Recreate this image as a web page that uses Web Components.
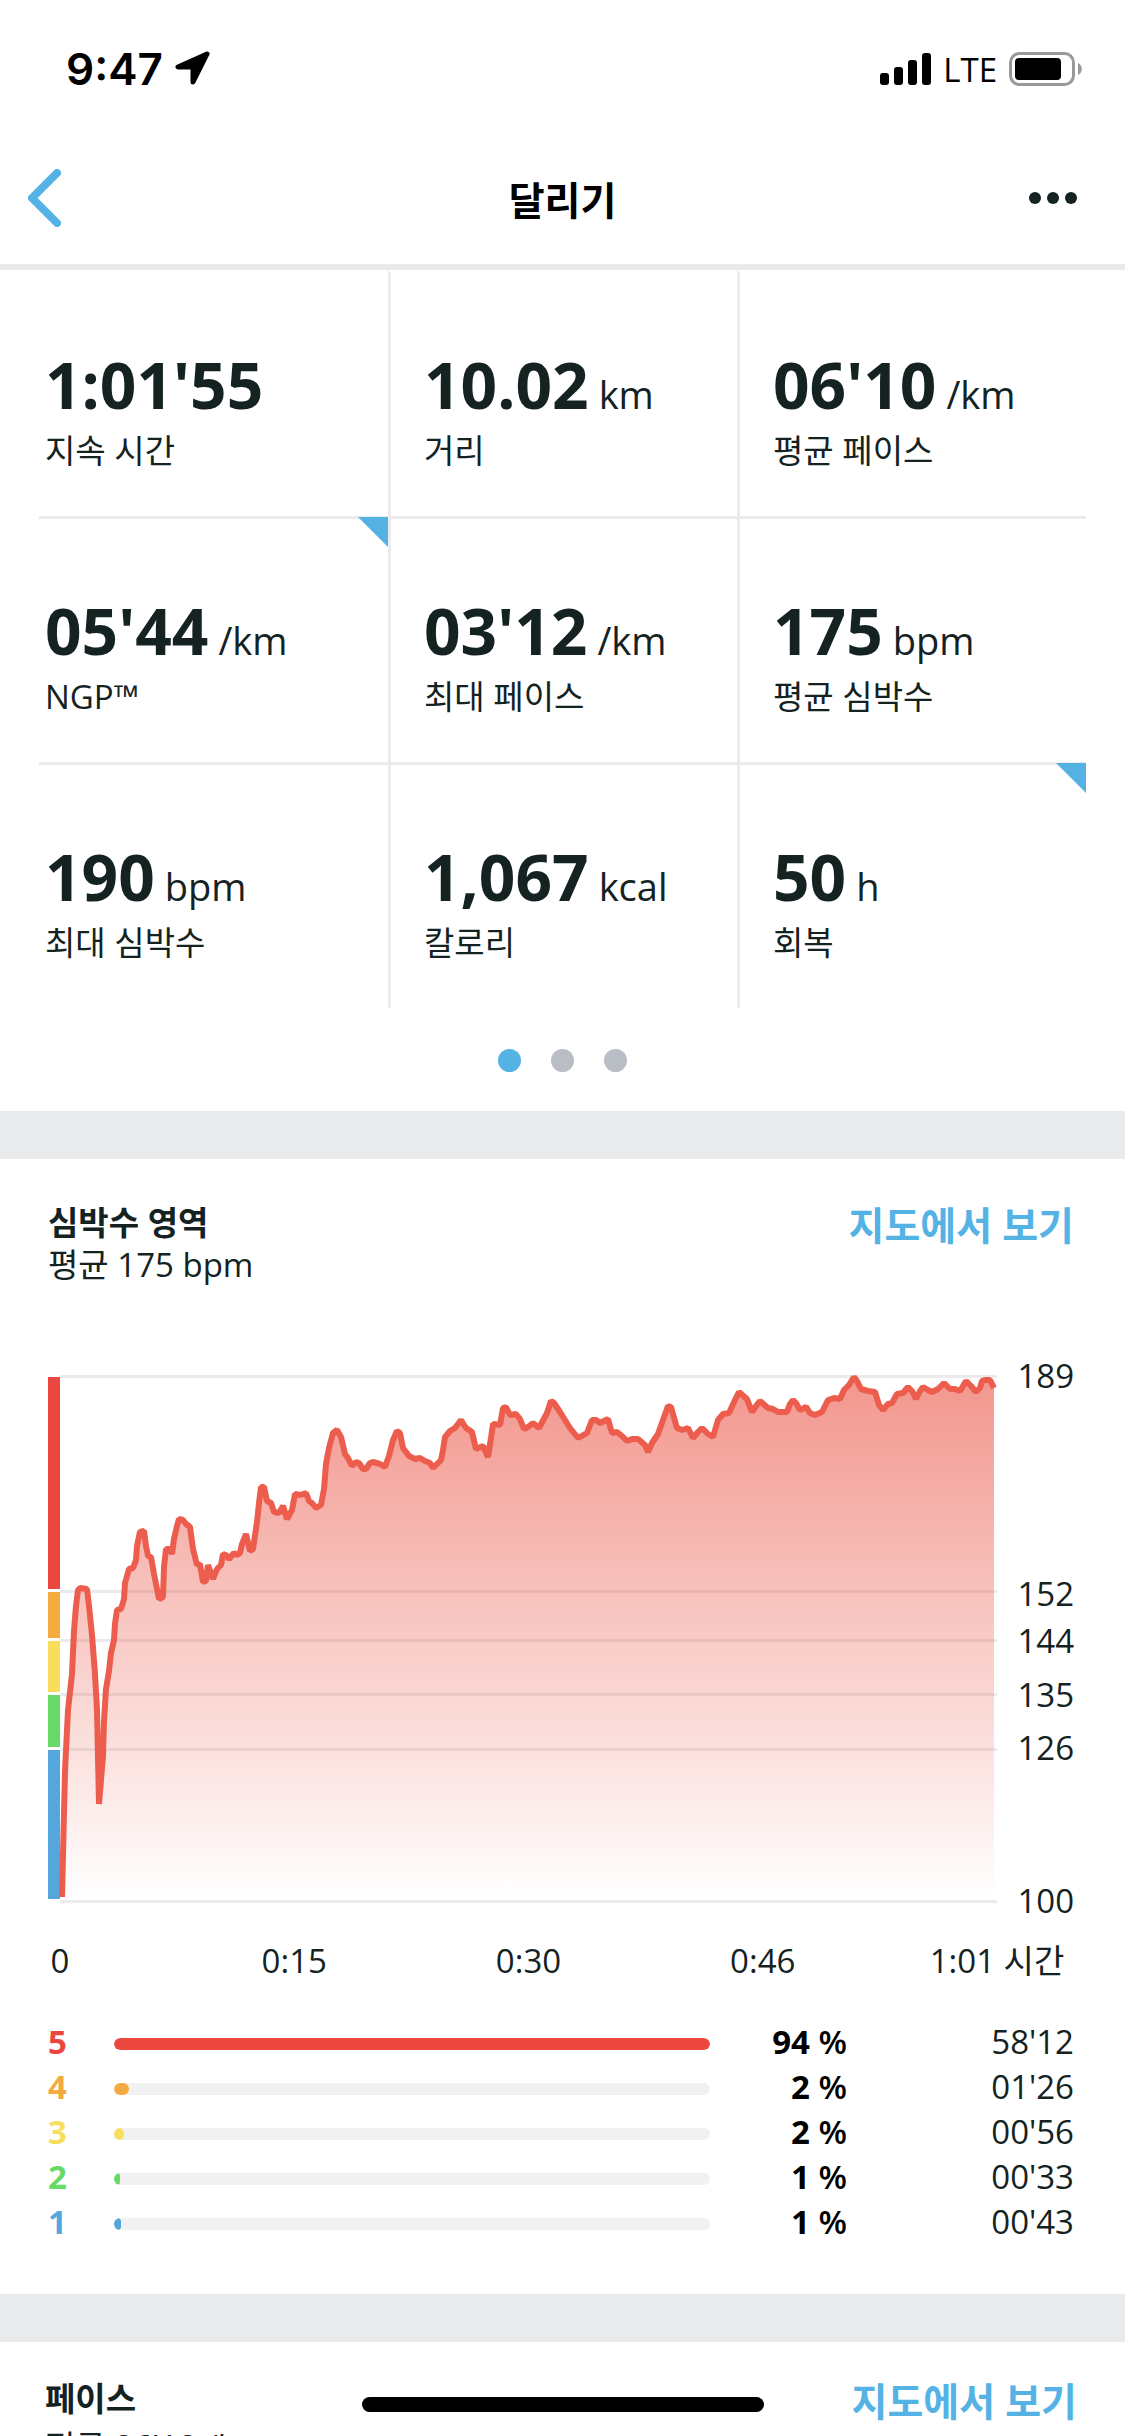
<!DOCTYPE html>
<html lang="ko">
<head>
<meta charset="utf-8">
<meta name="viewport" content="width=device-width, initial-scale=1">
<title>달리기</title>
<style>
  body {
    margin: 0;
    background: #fff;
  }
</style>
</head>
<body>
<workout-app></workout-app>

<script>
const ZONES = [
  { zone: 5, from: 152, percent: 94, time: "58'12", color: "#eb473f" },
  { zone: 4, from: 144, percent: 2, time: "01'26", color: "#f3ab3f" },
  { zone: 3, from: 135, percent: 2, time: "00'56", color: "#f9dd5c" },
  { zone: 2, from: 126, percent: 1, time: "00'33", color: "#67da68" },
  { zone: 1, from: 100, percent: 1, time: "00'43", color: "#55a6dd" }
];

const MAX_BPM = 189;
const TICKS = ["0", "0:15", "0:30", "0:46", "1:01 시간"];

const CURVE = `2,521 5,395 8,334 12,298 14,255 16,230 18,214 20,212 27,213 29,230 32,259 35,298 37,334 39,428
  43,380 44,345 46,313 49,295 51,277 54,264 55,248 57,234 61,233 64,223 65,207 69,193 73,192 76,184 77,170
  80,156 84,155 86,170 88,180 91,181 94,198 99,223 103,221 104,191 106,173 110,173 112,178 114,163 117,150
  119,143 123,144 126,148 130,151 133,173 137,189 140,188 143,206 146,205 148,189 153,203 157,193 161,189
  163,178 166,179 169,183 174,177 177,179 180,177 182,168 186,158 190,175 193,173 197,146 199,127 201,111
  204,111 207,125 211,127 214,136 219,137 223,130 227,143 232,134 235,118 240,119 246,117 249,125 252,127
  256,132 261,129 264,113 266,88 269,72 273,57 277,54 281,61 285,78 288,82 292,90 296,86 299,87 303,93
  306,93 310,87 313,86 320,88 325,91 329,80 333,64 337,55 340,57 343,72 349,80 355,83 360,82 365,85 370,87
  373,92 381,84 383,74 385,61 390,55 395,52 401,44 406,52 412,56 416,73 423,70 428,81 431,62 433,48 440,49
  443,32 446,31 450,39 456,38 460,43 464,53 468,51 473,47 479,52 487,37 491,25 494,27 500,36 510,52 518,62
  527,57 532,44 536,44 540,47 548,43 552,57 557,56 562,60 567,65 572,63 578,63 585,69 588,76 592,67 598,58
  603,44 608,30 611,31 617,52 622,54 628,52 633,62 638,56 642,52 648,58 653,61 658,44 663,38 669,37 675,24
  679,16 687,23 692,36 696,30 700,25 708,32 713,33 718,36 727,36 730,28 733,24 736,27 740,34 746,31 750,37
  755,39 762,36 768,24 774,22 780,23 784,14 789,9 794,1 797,5 801,13 808,15 815,16 819,29 823,34 828,28
  832,27 837,18 843,17 848,11 852,15 856,23 860,15 863,11 868,14 872,16 878,13 884,7 890,13 895,13 900,15
  906,5 911,10 916,16 920,12 922,5 926,4 930,4 934,12`;

class StatusBar extends HTMLElement {
  constructor() {
    super();
    this.attachShadow({ mode: "open" });
  }

  static get styles() {
    return /* css */`
      :host {
        display: flex;
        justify-content: space-between;
        align-items: center;
        box-sizing: border-box;
        height: 132px;
        padding: 6px 43px 0 66px;
        color: #000;
      }

      .side {
        display: flex;
        align-items: center;
        gap: 12px;
      }

      .time {
        font-family: Inter, "Liberation Sans", sans-serif;
        font-size: 44px;
        font-weight: 600;
      }

      .network {
        font-size: 33px;
        font-weight: 500;
      }

      svg {
        display: block;
      }
    `;
  }

  connectedCallback() {
    this.render();
  }

  render() {
    this.shadowRoot.innerHTML = /* html */`
    <style>${StatusBar.styles}</style>
    <div class="side">
      <span class="time">9:47</span>
      <svg width="36" height="36" viewBox="0 0 36 36" aria-hidden="true">
        <path d="M32 3 3 16h15v15z" stroke="#000" stroke-width="5" stroke-linejoin="round"/>
      </svg>
    </div>
    <div class="side">
      <svg width="51" height="32" viewBox="0 0 51 32" aria-hidden="true">
        <rect y="20" width="9" height="12" rx="3"/>
        <rect x="14" y="14" width="9" height="18" rx="3"/>
        <rect x="28" y="7" width="9" height="25" rx="3"/>
        <rect x="42" width="9" height="32" rx="3"/>
      </svg>
      <span class="network">LTE</span>
      <svg width="73" height="34" viewBox="0 0 73 34" aria-hidden="true">
        <rect x="1.5" y="1.5" width="63" height="31" rx="9" fill="none" stroke="#999" stroke-width="3"/>
        <rect x="6" y="6" width="46" height="22" rx="4"/>
        <path d="M69 11c5 2 5 10 0 12z" fill="#999"/>
      </svg>
    </div>`;
  }
}

class NavBar extends HTMLElement {
  constructor() {
    super();
    this.attachShadow({ mode: "open" });
  }

  static get styles() {
    return /* css */`
      :host {
        display: grid;
        grid-template-columns: 1fr auto 1fr;
        align-items: center;
        height: 132px;
        border-bottom: 6px solid var(--color-band);
      }

      h1 {
        margin: 0;
        padding-top: 4px;
        color: #000;
        font-size: 39px;
        line-height: 50px;
        font-weight: 600;
      }

      button {
        padding: 20px 28px;
        border: 0;
        background: none;
      }

      .more {
        justify-self: end;
        padding: 20px 48px;
      }

      svg {
        display: block;
      }
    `;
  }

  connectedCallback() {
    this.render();
  }

  render() {
    this.shadowRoot.innerHTML = /* html */`
    <style>${NavBar.styles}</style>
    <button aria-label="뒤로">
      <svg width="33" height="58" viewBox="0 0 33 58">
        <path d="M29 4 4 29l25 25" fill="none" stroke="#54b2e5" stroke-width="8" stroke-linecap="round" stroke-linejoin="round"/>
      </svg>
    </button>
    <h1><slot></slot></h1>
    <button class="more" aria-label="더 보기">
      <svg width="48" height="12" viewBox="0 0 48 12" fill="#142222">
        <circle cx="6" cy="6" r="6"/>
        <circle cx="24" cy="6" r="6"/>
        <circle cx="42" cy="6" r="6"/>
      </svg>
    </button>`;
  }
}

class MetricCell extends HTMLElement {
  constructor() {
    super();
    this.attachShadow({ mode: "open" });
  }

  static get styles() {
    return /* css */`
      :host {
        display: block;
        position: relative;
        box-sizing: border-box;
        padding: 80px 0 43px 33px;
        border-top: 3px solid var(--color-line);
        border-left: 3px solid var(--color-line);
      }

      :host(:nth-child(3n + 1)) {
        padding-left: 6px;
        border-left: 0;
      }

      :host(:nth-child(-n + 3)) {
        border-top-color: transparent;
      }

      :host([details])::after {
        content: "";
        position: absolute;
        top: -2px;
        right: 0;
        width: 30px;
        height: 30px;
        background: var(--color-accent);
        clip-path: polygon(0 0, 100% 0, 100% 100%);
      }

      .value {
        display: flex;
        align-items: baseline;
        gap: 10px;
        font-size: 38px;
        line-height: 38px;
        white-space: nowrap;
      }

      strong {
        font-size: 64px;
        line-height: 64px;
        font-weight: 700;
      }

      .label {
        margin-top: 12px;
        font-size: 33px;
        line-height: 44px;
      }
    `;
  }

  connectedCallback() {
    this.render();
  }

  render() {
    const unit = this.getAttribute("unit");
    this.shadowRoot.innerHTML = /* html */`
    <style>${MetricCell.styles}</style>
    <div class="value">
      <strong>${this.getAttribute("value")}</strong>
      ${unit ? `<span>${unit}</span>` : ""}
    </div>
    <div class="label"><slot></slot></div>`;
  }
}

class MetricPager extends HTMLElement {
  constructor() {
    super();
    this.attachShadow({ mode: "open" });
  }

  static get styles() {
    return /* css */`
      :host {
        display: block;
        border-bottom: 48px solid var(--color-band);
      }

      .grid {
        display: grid;
        grid-template-columns: repeat(3, 1fr);
        margin: 0 39px;
      }

      .dots {
        display: flex;
        justify-content: center;
        gap: 30px;
        padding: 41px 0 39px;
      }

      button {
        width: 23px;
        height: 23px;
        padding: 0;
        border: 0;
        border-radius: 50%;
        background: #b9bec4;
      }

      .on {
        background: var(--color-accent);
      }
    `;
  }

  connectedCallback() {
    this.render();
  }

  render() {
    this.shadowRoot.innerHTML = /* html */`
    <style>${MetricPager.styles}</style>
    <div class="grid"><slot></slot></div>
    <div class="dots">
      <button class="on" aria-label="1 페이지"></button>
      <button aria-label="2 페이지"></button>
      <button aria-label="3 페이지"></button>
    </div>`;
  }
}

class ChartSection extends HTMLElement {
  constructor() {
    super();
    this.attachShadow({ mode: "open" });
  }

  static get styles() {
    return /* css */`
      :host {
        display: block;
        padding: 43px 51px 50px 48px;
        border-bottom: 48px solid var(--color-band);
      }

      :host([compact]) {
        padding: 36px 48px 50px 45px;
      }

      header {
        display: flex;
        justify-content: space-between;
        align-items: flex-start;
        font-size: 33px;
        line-height: 42px;
      }

      h2 {
        margin: 0;
        font-size: 33px;
        font-weight: 600;
      }

      :host([compact]) h2 {
        margin-bottom: 6px;
      }

      p {
        margin: 0;
      }

      a {
        color: var(--color-accent);
        font-size: 39px;
        line-height: 46px;
        font-weight: 600;
        text-decoration: none;
      }
    `;
  }

  connectedCallback() {
    this.render();
  }

  render() {
    this.shadowRoot.innerHTML = /* html */`
    <style>${ChartSection.styles}</style>
    <header>
      <div>
        <h2>${this.getAttribute("heading")}</h2>
        <p>${this.getAttribute("average")}</p>
      </div>
      <a href="#map">지도에서 보기</a>
    </header>
    <slot></slot>`;
  }
}

class HeartChart extends HTMLElement {
  constructor() {
    super();
    this.attachShadow({ mode: "open" });
  }

  static get styles() {
    return /* css */`
      :host {
        display: block;
        margin-top: 89px;
        font-size: 33px;
        line-height: 44px;
      }

      .chart {
        display: grid;
        grid-template-columns: 12px 1fr 77px;
        height: 528px;
      }

      .zones, .lines, .labels {
        display: flex;
        flex-direction: column;
      }

      .zones {
        padding: 2px 0 4px;
        gap: 3px;
      }

      .plot {
        display: grid;
      }

      .plot > * {
        grid-area: 1 / 1;
      }

      .lines, .labels {
        border-bottom: 3px solid var(--color-line);
      }

      .labels {
        align-items: flex-end;
        border-bottom-color: transparent;
      }

      .lines div {
        border-top: 3px solid var(--color-line);
      }

      .labels span {
        height: 0;
      }

      .labels b {
        display: block;
        margin-top: -21px;
        font-weight: 400;
      }

      svg {
        width: 100%;
        height: 100%;
        overflow: visible;
      }

      .ticks {
        display: flex;
        justify-content: space-between;
        margin: 36px 77px 0 12px;
      }

      .ticks span {
        display: flex;
        justify-content: center;
        width: 0;
        white-space: nowrap;
      }
    `;
  }

  connectedCallback() {
    this.render();
  }

  // every band is as tall as its share of the bpm range
  bands(draw) {
    let top = MAX_BPM;
    return ZONES.map(zone => {
      const html = draw(zone, top - zone.from, top);
      top = zone.from;
      return html;
    }).join("");
  }

  render() {
    this.shadowRoot.innerHTML = /* html */`
    <style>${HeartChart.styles}</style>
    <div class="chart">
      <div class="zones">
        ${this.bands((zone, size) => `<div style="flex: ${size} 0 0; background: ${zone.color}"></div>`)}
      </div>
      <div class="plot">
        <div class="lines">
          ${this.bands((zone, size) => `<div style="flex: ${size} 0 0; box-sizing: border-box"></div>`)}
        </div>
        <svg viewBox="0 -1 937 528" preserveAspectRatio="none" aria-hidden="true">
          <defs>
            <linearGradient id="fade" x1="0" y1="0" x2="0" y2="1">
              <stop offset="0" stop-color="#e94b3c" stop-opacity=".58"/>
              <stop offset="1" stop-color="#e94b3c" stop-opacity="0"/>
            </linearGradient>
          </defs>
          <polygon points="${CURVE} 934,524 2,524" fill="url(#fade)"/>
          <polyline points="${CURVE}" fill="none" stroke="#ec5d4d" stroke-width="6" stroke-linejoin="bevel"/>
        </svg>
      </div>
      <div class="labels">
        ${this.bands((zone, size, top) => `<span style="flex: ${size} 0 0"><b>${top}</b></span>`)}
        <span><b>100</b></span>
      </div>
    </div>
    <div class="ticks">
      ${TICKS.map(tick => `<span>${tick}</span>`).join("")}
    </div>`;
  }
}

class ZoneTable extends HTMLElement {
  constructor() {
    super();
    this.attachShadow({ mode: "open" });
  }

  static get styles() {
    return /* css */`
      :host {
        display: block;
        margin-top: 36px;
      }

      table {
        width: 100%;
        border-collapse: collapse;
        table-layout: fixed;
        font-size: 33px;
        line-height: 45px;
      }

      th, td {
        padding: 0;
        text-align: right;
        font-weight: 400;
      }

      .zone {
        width: 66px;
        text-align: left;
        font-weight: 700;
      }

      .percent {
        width: 137px;
        color: #000;
        font-weight: 700;
      }

      .unit {
        font-weight: 600;
      }

      .time {
        width: 227px;
      }

      .bar {
        padding-top: 4px;
      }

      .track {
        overflow: hidden;
        height: 12px;
        border-radius: 6px;
        background: #f1f1f1;
      }

      .fill {
        height: 100%;
        border-radius: 6px;
      }
    `;
  }

  connectedCallback() {
    this.render();
  }

  seconds(time) {
    const [min, sec] = time.split("'");
    return min * 60 + Number(sec);
  }

  render() {
    const longest = Math.max(...ZONES.map(row => this.seconds(row.time)));
    this.shadowRoot.innerHTML = /* html */`
    <style>${ZoneTable.styles}</style>
    <table>
      ${ZONES.map(row => /* html */`
      <tr>
        <th class="zone" scope="row" style="color: ${row.color}">${row.zone}</th>
        <td class="bar">
          <div class="track">
            <div class="fill" style="width: ${this.seconds(row.time) / longest * 100}%; background: ${row.color}"></div>
          </div>
        </td>
        <td class="percent">${row.percent} <span class="unit">%</span></td>
        <td class="time">${row.time}</td>
      </tr>`).join("")}
    </table>`;
  }
}

class WorkoutApp extends HTMLElement {
  constructor() {
    super();
    this.attachShadow({ mode: "open" });
  }

  static get styles() {
    return /* css */`
      :host {
        --color-accent: #54b2e5;
        --color-band: #e9eaec;
        --color-line: #ebebed;

        display: block;
        position: relative;
        overflow: hidden;
        height: 100vh;
        color: #142222;
        font-family: "Open Sans", "Noto Sans CJK KR", sans-serif;
      }

      .home {
        position: absolute;
        left: 50%;
        bottom: 24px;
        width: 402px;
        height: 15px;
        margin-left: -201px;
        border-radius: 8px;
        background: #000;
      }
    `;
  }

  connectedCallback() {
    this.render();
  }

  render() {
    this.shadowRoot.innerHTML = /* html */`
    <style>${WorkoutApp.styles}</style>
    <status-bar></status-bar>
    <nav-bar>달리기</nav-bar>
    <main>
      <metric-pager>
        <metric-cell value="1:01'55">지속 시간</metric-cell>
        <metric-cell value="10.02" unit="km">거리</metric-cell>
        <metric-cell value="06'10" unit="/km">평균 페이스</metric-cell>
        <metric-cell value="05'44" unit="/km" details>NGP™</metric-cell>
        <metric-cell value="03'12" unit="/km">최대 페이스</metric-cell>
        <metric-cell value="175" unit="bpm">평균 심박수</metric-cell>
        <metric-cell value="190" unit="bpm">최대 심박수</metric-cell>
        <metric-cell value="1,067" unit="kcal">칼로리</metric-cell>
        <metric-cell value="50" unit="h" details>회복</metric-cell>
      </metric-pager>
      <chart-section heading="심박수 영역" average="평균 175 bpm">
        <heart-chart></heart-chart>
        <zone-table></zone-table>
      </chart-section>
      <chart-section heading="페이스" average="평균 06'10 /km" compact></chart-section>
    </main>
    <div class="home"></div>`;
  }
}

customElements.define("status-bar", StatusBar);
customElements.define("nav-bar", NavBar);
customElements.define("metric-cell", MetricCell);
customElements.define("metric-pager", MetricPager);
customElements.define("chart-section", ChartSection);
customElements.define("heart-chart", HeartChart);
customElements.define("zone-table", ZoneTable);
customElements.define("workout-app", WorkoutApp);
</script>
</body>
</html>
